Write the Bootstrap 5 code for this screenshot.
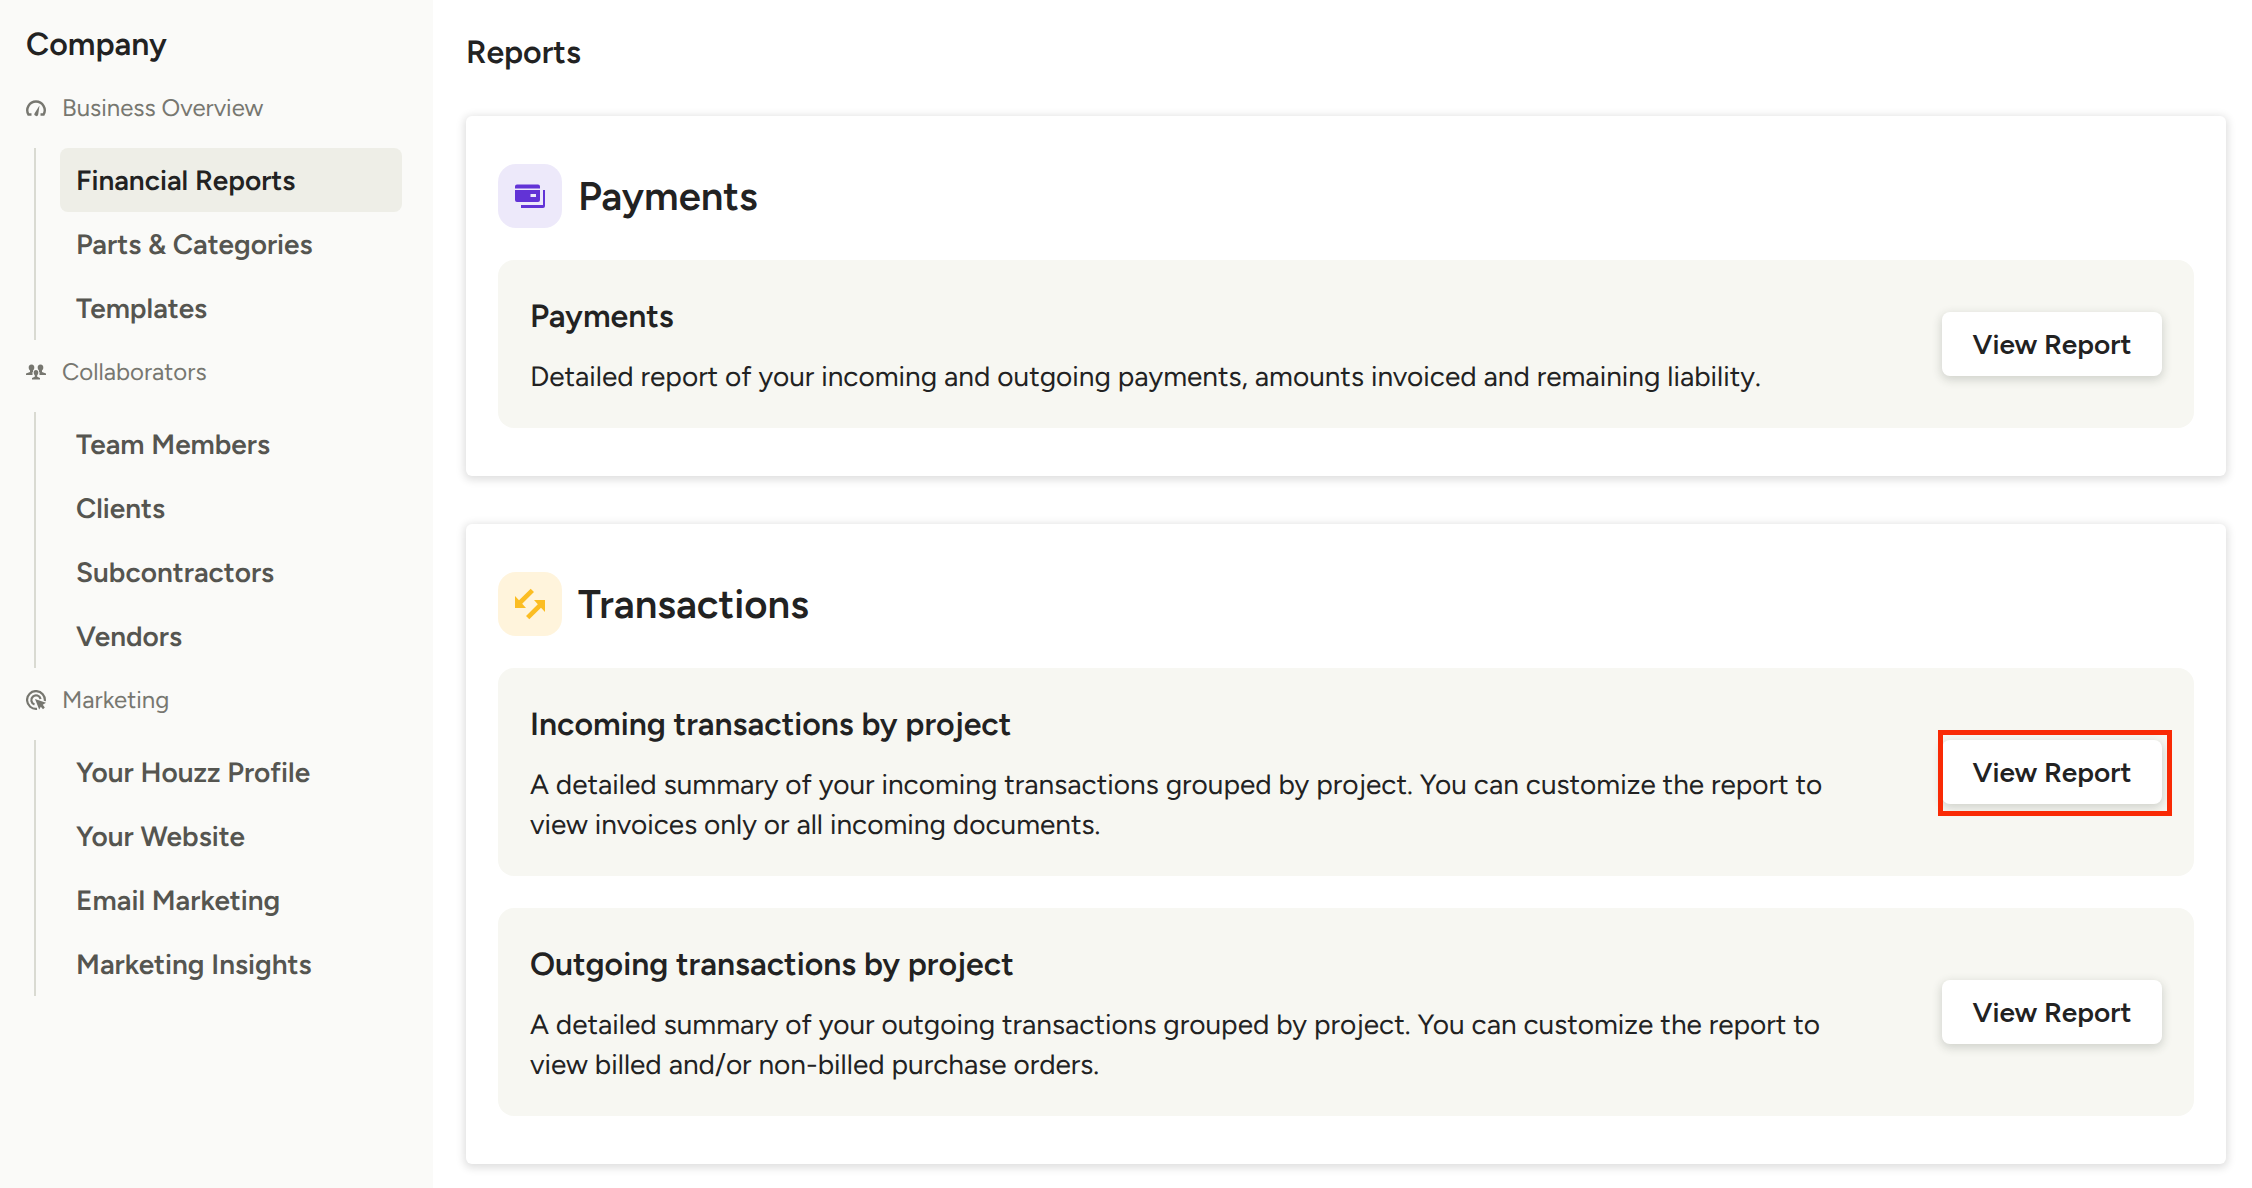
<!DOCTYPE html>
<html lang="en">
<head>
<meta charset="utf-8">
<meta name="viewport" content="width=device-width, initial-scale=1">
<title>Company – Reports</title>
<link href="https://cdn.jsdelivr.net/npm/bootstrap@5.3.0/dist/css/bootstrap.min.css" rel="stylesheet">
<style>
  body { font-family: Figtree, Lato, sans-serif; color: #222; background: #fff; text-rendering: geometricPrecision; }
  .side-pane { flex: 0 0 433px; background: #fafaf8; padding: 20px 31px 0 26px; }
  .pane-title, .page-title, .report-title { font-size: 32px; line-height: 48px; font-weight: 600; margin: 0; }
  .pane-title { margin-bottom: 8px; }
  .group-label { height: 64px; gap: 16px; font-size: 24px; line-height: 32px; font-weight: 400; color: #777770; margin: 0 0 8px; }
  .group-links { border-left: 2px solid #d9dad2; margin: 0 0 0 8px; padding-left: 24px; }
  .side-link { height: 64px; padding: 0 16px; border-radius: 8px; font-size: 28px; font-weight: 600; color: #555550; }
  .side-link:hover { color: #222; }
  .side-link.active { background: #eeeee7; color: #222; }
  .main-pane { padding: 28px 26px 24px 33px; min-width: 0; }
  .page-title { margin-bottom: 40px; }
  .report-card { border: 0; border-radius: 6px; padding: 48px 32px; gap: 32px; box-shadow: 0 2px 8px 2px rgba(0,0,0,.13); margin-bottom: 48px; }
  .card-heading { gap: 16px; }
  .card-heading h2 { font-size: 40px; line-height: 48px; font-weight: 600; margin: 0; }
  .tile { width: 64px; height: 64px; border-radius: 18px; }
  .tile-violet { background: #ede9fa; }
  .tile-amber { background: #fff4dc; }
  .report-row { background: #f7f7f2; border-radius: 16px; padding: 32px; gap: 88px; }
  .report-text { font-size: 28px; line-height: 40px; margin: 16px 0 0; }
  .btn-report { --bs-btn-bg: #fff; --bs-btn-color: #222; --bs-btn-hover-bg: #fafaf8; width: 220px; height: 64px; padding: 0; border: 0; border-radius: 8px; font-size: 28px; font-weight: 600; box-shadow: 0 3px 10px 1px rgba(40,50,40,.18); }
  .marker { position: absolute; top: -10px; right: -10px; bottom: -12px; left: -4px; border: 5px solid #f92a05; pointer-events: none; }
</style>
<script src="https://cdn.jsdelivr.net/npm/bootstrap@5.3.0/dist/js/bootstrap.bundle.min.js"></script>
</head>
<body>
<div class="d-flex min-vh-100">
  <nav class="side-pane" aria-label="Company">
    <h1 class="pane-title">Company</h1>
    <div>
      <h2 class="group-label d-flex align-items-center">
        <svg width="20" height="20" viewBox="0 0 20 20" aria-hidden="true"><path d="M5.500 16.500H2.400A8.700 8.700 0 1 1 17.600 16.500H14.500" fill="none" stroke="#777770" stroke-width="2.400"/><path d="M13.500 7.500L12.200 16.500A1.900 1.900 0 1 1 8.800 15Z" fill="#777770"/></svg>
        Business Overview
      </h2>
      <div class="group-links nav flex-column">
        <a href="#" class="side-link active d-flex align-items-center text-decoration-none" aria-current="page">Financial Reports</a>
        <a href="#" class="side-link d-flex align-items-center text-decoration-none">Parts &amp; Categories</a>
        <a href="#" class="side-link d-flex align-items-center text-decoration-none">Templates</a>
      </div>
    </div>
    <div>
      <h2 class="group-label d-flex align-items-center">
        <svg width="20" height="20" viewBox="0 0 20 20" aria-hidden="true" fill="#777770"><path d="M5.500 2.500C7.500 2.500 8.500 3.800 8.300 6C8.200 7.200 7.600 8 7 8.500V10H6.500V13H0V11.500L4 10V8.500C3.400 8 2.800 7.200 2.700 6C2.500 3.800 3.500 2.500 5.500 2.500Z"/><path d="M14.500 2.500C12.500 2.500 11.500 3.800 11.700 6C11.800 7.200 12.400 8 13 8.500V10H13.500V13H20V11.500L16 10V8.500C16.600 8 17.200 7.200 17.300 6C17.500 3.800 16.500 2.500 14.500 2.500Z"/><path d="M10 8C11.500 8 12.400 9 12.300 10.800C12.200 12 11.800 12.700 11.200 13.200V14.700L14 16V17.500H6V16L8.800 14.700V13.200C8.200 12.700 7.800 12 7.700 10.800C7.600 9 8.500 8 10 8Z"/></svg>
        Collaborators
      </h2>
      <div class="group-links nav flex-column">
        <a href="#" class="side-link d-flex align-items-center text-decoration-none">Team Members</a>
        <a href="#" class="side-link d-flex align-items-center text-decoration-none">Clients</a>
        <a href="#" class="side-link d-flex align-items-center text-decoration-none">Subcontractors</a>
        <a href="#" class="side-link d-flex align-items-center text-decoration-none">Vendors</a>
      </div>
    </div>
    <div>
      <h2 class="group-label d-flex align-items-center">
        <svg width="20" height="20" viewBox="0 0 20 20" aria-hidden="true"><g fill="none" stroke="#777770" stroke-width="2.200"><path d="M11 18.800A8.900 8.900 0 1 1 18.800 11"/><path d="M8.500 14.500A4.700 4.700 0 1 1 14.600 9"/></g><path d="M9 9L20 12.800L16.800 14.800L18.800 17.500L17 19.200L14.800 16.800L13.200 19.500Z" fill="#777770"/></svg>
        Marketing
      </h2>
      <div class="group-links nav flex-column">
        <a href="#" class="side-link d-flex align-items-center text-decoration-none">Your Houzz Profile</a>
        <a href="#" class="side-link d-flex align-items-center text-decoration-none">Your Website</a>
        <a href="#" class="side-link d-flex align-items-center text-decoration-none">Email Marketing</a>
        <a href="#" class="side-link d-flex align-items-center text-decoration-none">Marketing Insights</a>
      </div>
    </div>
  </nav>

  <main class="main-pane flex-grow-1">
    <h1 class="page-title">Reports</h1>

    <section class="card report-card">
      <div class="card-heading d-flex align-items-center">
        <span class="tile tile-violet d-flex align-items-center justify-content-center flex-shrink-0">
          <svg width="32" height="32" viewBox="0 0 32 32" aria-hidden="true" fill="#6233d6"><path d="M3 4.500h21a2 2 0 0 1 2 2v2H1V6.500a2 2 0 0 1 2-2Z"/><path fill-rule="evenodd" d="M1 10H26V20a2 2 0 0 1-2 2H3a2 2 0 0 1-2-2ZM16.500 14v3H22v-3Z"/><path d="M29 10h2V26a2 2 0 0 1-2 2H7V25H29Z"/></svg>
        </span>
        <h2>Payments</h2>
      </div>
      <div class="report-row d-flex align-items-center">
        <div class="flex-grow-1">
          <h3 class="report-title">Payments</h3>
          <p class="report-text">Detailed report of your incoming and outgoing payments, amounts invoiced and remaining liability.</p>
        </div>
        <button type="button" class="btn btn-report flex-shrink-0">View Report</button>
      </div>
    </section>

    <section class="card report-card mb-0">
      <div class="card-heading d-flex align-items-center">
        <span class="tile tile-amber d-flex align-items-center justify-content-center flex-shrink-0">
          <svg width="32" height="32" viewBox="0 0 32 32" aria-hidden="true" fill="#fbbd23"><path d="M1 8L5 12.300L16.700 .7L20 4L8.200 15.800L12 20H1Z"/><path d="M31 24L27 19.700L15.300 31.300L12 28L23.800 16.200L20 12H31Z"/></svg>
        </span>
        <h2>Transactions</h2>
      </div>
      <div class="report-row d-flex align-items-center">
        <div class="flex-grow-1">
          <h3 class="report-title">Incoming transactions by project</h3>
          <p class="report-text">A detailed summary of your incoming transactions grouped by project. You can customize the report to view invoices only or all incoming documents.</p>
        </div>
        <div class="position-relative flex-shrink-0">
          <button type="button" class="btn btn-report d-block">View Report</button>
          <span class="marker"></span>
        </div>
      </div>
      <div class="report-row d-flex align-items-center">
        <div class="flex-grow-1">
          <h3 class="report-title">Outgoing transactions by project</h3>
          <p class="report-text">A detailed summary of your outgoing transactions grouped by project. You can customize the report to view billed and/or non-billed purchase orders.</p>
        </div>
        <button type="button" class="btn btn-report flex-shrink-0">View Report</button>
      </div>
    </section>
  </main>
</div>
</body>
</html>
